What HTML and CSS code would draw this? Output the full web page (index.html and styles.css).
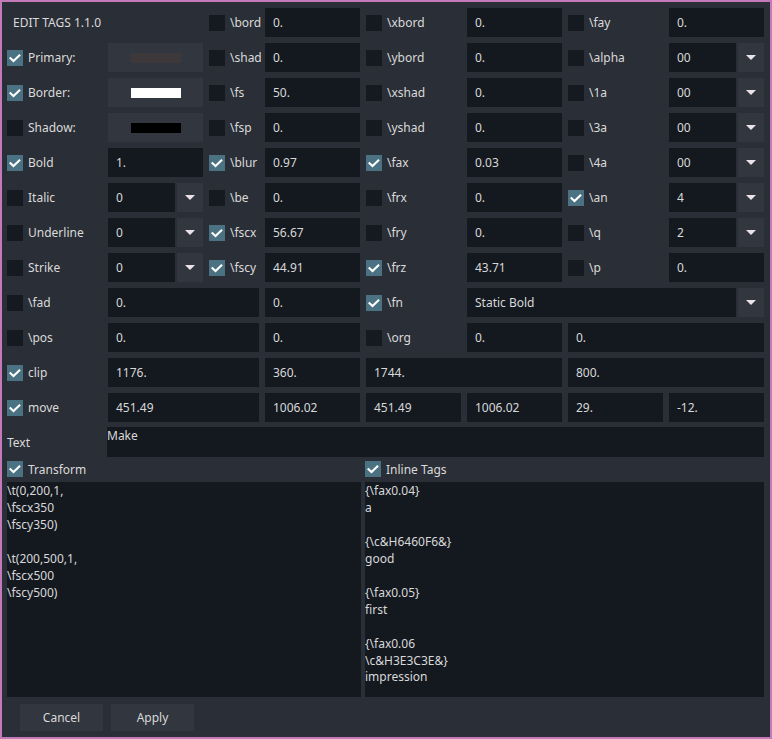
FILE: index.html
```html
<!DOCTYPE html>
<html>
<head>
<meta charset="utf-8">
<link rel="stylesheet" href="styles.css">
</head>
<body>
<div class="window">
  <div class="grid">
    <!-- row 1 -->
    <div class="title">EDIT TAGS 1.1.0</div>
    <div></div>
    <label class="chk"><span class="cb"></span>\bord</label>
    <div class="field">0.</div>
    <label class="chk"><span class="cb"></span>\xbord</label>
    <div class="field">0.</div>
    <label class="chk"><span class="cb"></span>\fay</label>
    <div class="field">0.</div>
    <!-- row 2 -->
    <label class="chk"><span class="cb on"><svg viewBox="0 0 16 16"><path d="M3.5 8.2l3 2.8 5.8-5.6"/></svg></span>Primary:</label>
    <div class="colorbtn"><span class="swatch sw-primary"></span></div>
    <label class="chk"><span class="cb"></span>\shad</label>
    <div class="field">0.</div>
    <label class="chk"><span class="cb"></span>\ybord</label>
    <div class="field">0.</div>
    <label class="chk"><span class="cb"></span>\alpha</label>
    <div class="combo"><div class="field">00</div><div class="arrow"></div></div>
    <!-- row 3 -->
    <label class="chk"><span class="cb on"><svg viewBox="0 0 16 16"><path d="M3.5 8.2l3 2.8 5.8-5.6"/></svg></span>Border:</label>
    <div class="colorbtn"><span class="swatch sw-white"></span></div>
    <label class="chk"><span class="cb"></span>\fs</label>
    <div class="field">50.</div>
    <label class="chk"><span class="cb"></span>\xshad</label>
    <div class="field">0.</div>
    <label class="chk"><span class="cb"></span>\1a</label>
    <div class="combo"><div class="field">00</div><div class="arrow"></div></div>
    <!-- row 4 -->
    <label class="chk"><span class="cb"></span>Shadow:</label>
    <div class="colorbtn"><span class="swatch sw-black"></span></div>
    <label class="chk"><span class="cb"></span>\fsp</label>
    <div class="field">0.</div>
    <label class="chk"><span class="cb"></span>\yshad</label>
    <div class="field">0.</div>
    <label class="chk"><span class="cb"></span>\3a</label>
    <div class="combo"><div class="field">00</div><div class="arrow"></div></div>
    <!-- row 5 -->
    <label class="chk"><span class="cb on"><svg viewBox="0 0 16 16"><path d="M3.5 8.2l3 2.8 5.8-5.6"/></svg></span>Bold</label>
    <div class="field">1.</div>
    <label class="chk"><span class="cb on"><svg viewBox="0 0 16 16"><path d="M3.5 8.2l3 2.8 5.8-5.6"/></svg></span>\blur</label>
    <div class="field">0.97</div>
    <label class="chk"><span class="cb on"><svg viewBox="0 0 16 16"><path d="M3.5 8.2l3 2.8 5.8-5.6"/></svg></span>\fax</label>
    <div class="field">0.03</div>
    <label class="chk"><span class="cb"></span>\4a</label>
    <div class="combo"><div class="field">00</div><div class="arrow"></div></div>
    <!-- row 6 -->
    <label class="chk"><span class="cb"></span>Italic</label>
    <div class="combo"><div class="field">0</div><div class="arrow"></div></div>
    <label class="chk"><span class="cb"></span>\be</label>
    <div class="field">0.</div>
    <label class="chk"><span class="cb"></span>\frx</label>
    <div class="field">0.</div>
    <label class="chk"><span class="cb on"><svg viewBox="0 0 16 16"><path d="M3.5 8.2l3 2.8 5.8-5.6"/></svg></span>\an</label>
    <div class="combo"><div class="field">4</div><div class="arrow"></div></div>
    <!-- row 7 -->
    <label class="chk"><span class="cb"></span>Underline</label>
    <div class="combo"><div class="field">0</div><div class="arrow"></div></div>
    <label class="chk"><span class="cb on"><svg viewBox="0 0 16 16"><path d="M3.5 8.2l3 2.8 5.8-5.6"/></svg></span>\fscx</label>
    <div class="field">56.67</div>
    <label class="chk"><span class="cb"></span>\fry</label>
    <div class="field">0.</div>
    <label class="chk"><span class="cb"></span>\q</label>
    <div class="combo"><div class="field">2</div><div class="arrow"></div></div>
    <!-- row 8 -->
    <label class="chk"><span class="cb"></span>Strike</label>
    <div class="combo"><div class="field">0</div><div class="arrow"></div></div>
    <label class="chk"><span class="cb on"><svg viewBox="0 0 16 16"><path d="M3.5 8.2l3 2.8 5.8-5.6"/></svg></span>\fscy</label>
    <div class="field">44.91</div>
    <label class="chk"><span class="cb on"><svg viewBox="0 0 16 16"><path d="M3.5 8.2l3 2.8 5.8-5.6"/></svg></span>\frz</label>
    <div class="field">43.71</div>
    <label class="chk"><span class="cb"></span>\p</label>
    <div class="field">0.</div>
    <!-- row 9 -->
    <label class="chk"><span class="cb"></span>\fad</label>
    <div class="field span2">0.</div>
    <div class="field">0.</div>
    <label class="chk"><span class="cb on"><svg viewBox="0 0 16 16"><path d="M3.5 8.2l3 2.8 5.8-5.6"/></svg></span>\fn</label>
    <div class="combo span3"><div class="field">Static Bold</div><div class="arrow"></div></div>
    <!-- row 10 -->
    <label class="chk"><span class="cb"></span>\pos</label>
    <div class="field span2">0.</div>
    <div class="field">0.</div>
    <label class="chk"><span class="cb"></span>\org</label>
    <div class="field">0.</div>
    <div class="field span2">0.</div>
    <!-- row 11 -->
    <label class="chk"><span class="cb on"><svg viewBox="0 0 16 16"><path d="M3.5 8.2l3 2.8 5.8-5.6"/></svg></span>clip</label>
    <div class="field span2">1176.</div>
    <div class="field">360.</div>
    <div class="field span2">1744.</div>
    <div class="field span2">800.</div>
    <!-- row 12 -->
    <label class="chk"><span class="cb on"><svg viewBox="0 0 16 16"><path d="M3.5 8.2l3 2.8 5.8-5.6"/></svg></span>move</label>
    <div class="field span2">451.49</div>
    <div class="field">1006.02</div>
    <div class="field">451.49</div>
    <div class="field">1006.02</div>
    <div class="field">29.</div>
    <div class="field">-12.</div>
  </div>

  <div class="textrow">
    <div class="textlabel">Text</div>
    <div class="textfield">Make</div>
  </div>

  <div class="areas">
    <label class="chk"><span class="cb on"><svg viewBox="0 0 16 16"><path d="M3.5 8.2l3 2.8 5.8-5.6"/></svg></span>Transform</label>
    <label class="chk"><span class="cb on"><svg viewBox="0 0 16 16"><path d="M3.5 8.2l3 2.8 5.8-5.6"/></svg></span>Inline Tags</label>
    <div class="area">\t(0,200,1,
\fscx350
\fscy350)

\t(200,500,1,
\fscx500
\fscy500)</div>
    <div class="area">{\fax0.04}
a

{\c&amp;H6460F6&amp;}
good

{\fax0.05}
first

{\fax0.06
\c&amp;H3E3C3E&amp;}
impression</div>
  </div>

  <div class="buttons">
    <div class="btn">Cancel</div>
    <div class="btn">Apply</div>
  </div>
</div>
</body>
</html>
```

FILE: styles.css
```css
html, body {
  margin: 0;
  padding: 0;
  background: #2a2e36;
}
.window {
  box-sizing: border-box;
  width: 772px;
  height: 739px;
  border: 2px solid #c479b9;
  background: #2a2e36;
  padding: 6px 0 0 5px;
  font-family: "Noto Sans", "Open Sans", sans-serif;
  font-size: 12px;
  color: #dadada;
  overflow: hidden;
}
.grid {
  display: grid;
  grid-template-columns: 95px 95px 50px 95px 95px 95px 95px 95px;
  grid-template-rows: repeat(12, 29px);
  column-gap: 6px;
  row-gap: 6px;
  width: 757px;
}
.span2 { grid-column: span 2; }
.span3 { grid-column: span 3; }
.title {
  display: flex;
  align-items: center;
  padding-left: 6px;
  padding-bottom: 1px;
  white-space: nowrap;
}
.chk {
  display: flex;
  align-items: center;
  gap: 5px;
  white-space: nowrap;
}
.cb {
  flex: none;
  width: 16px;
  height: 16px;
  background: #151a21;
  display: block;
}
.cb.on {
  background: #4b7282;
}
.cb svg {
  display: block;
  width: 16px;
  height: 16px;
}
.cb path {
  fill: none;
  stroke: #ffffff;
  stroke-width: 2.1;
  stroke-linecap: square;
}
.field {
  background: #141920;
  display: flex;
  align-items: center;
  padding-left: 8px;
  min-width: 0;
  white-space: nowrap;
  color: #d8d8d8;
}
.combo {
  display: flex;
  gap: 2px;
}
.combo .field {
  flex: 1;
}
.arrow {
  flex: none;
  width: 26px;
  background: #31363f;
  display: flex;
  align-items: center;
  justify-content: center;
}
.arrow::after {
  content: "";
  width: 0;
  height: 0;
  border-left: 5px solid transparent;
  border-right: 5px solid transparent;
  border-top: 5px solid #ece3ea;
}
.colorbtn {
  background: #31363f;
  display: flex;
  align-items: center;
  justify-content: center;
}
.swatch {
  width: 50px;
  height: 10px;
  display: block;
}
.sw-primary { background: #3d393b; }
.sw-white { background: #ffffff; }
.sw-black { background: #000000; }
.textrow {
  display: flex;
  margin-top: 5px;
  height: 30px;
  width: 757px;
}
.textlabel {
  width: 100px;
  flex: none;
  display: flex;
  align-items: center;
}
.textfield {
  flex: 1;
  background: #141920;
  line-height: 17px;
  color: #d8d8d8;
}
.areas {
  display: grid;
  grid-template-columns: 354px 399px;
  grid-template-rows: 16px 215px;
  column-gap: 4px;
  row-gap: 5px;
  margin-top: 4px;
}
.area {
  background: #141920;
  white-space: pre;
  line-height: 16.95px;
  padding-top: 1px;
  color: #d8d8d8;
  overflow: hidden;
}
.buttons {
  display: flex;
  gap: 8px;
  margin-top: 7px;
  padding-left: 13px;
}
.btn {
  width: 83px;
  height: 27px;
  background: #31363f;
  display: flex;
  align-items: center;
  justify-content: center;
  color: #d8d8d8;
}
```
